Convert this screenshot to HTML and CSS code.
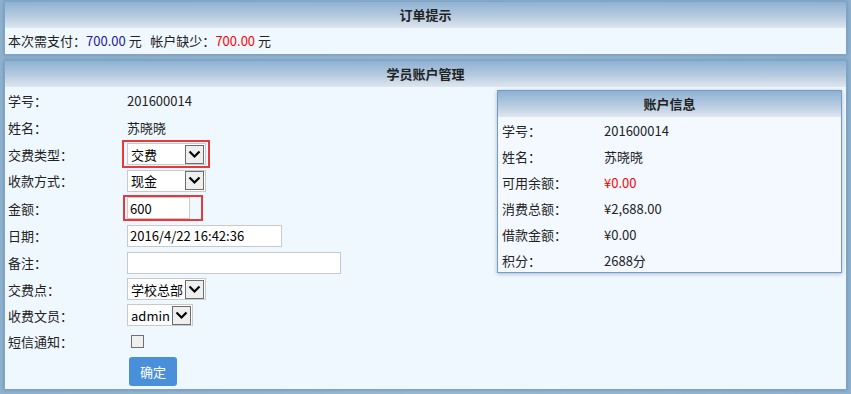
FILE: index.html
```html
<!DOCTYPE html>
<html lang="zh-CN">

<head>
  <meta charset="UTF-8">
  <title>学员账户管理</title>
  <link rel="stylesheet" href="styles.css">
</head>

<body>
  <div class="panel panel-order">
    <div class="panel-title">订单提示</div>
    <div class="order-line">
      本次需支付：<span class="pay">700.00</span> 元&nbsp;&nbsp;&nbsp;帐户缺少：<span class="lack">700.00</span> 元
    </div>
  </div>

  <div class="panel panel-main">
    <div class="panel-title">学员账户管理</div>
    <div class="main-body">
      <form class="form">
        <div class="row">
          <label>学号：</label>
          <span>201600014</span>
        </div>
        <div class="row">
          <label>姓名：</label>
          <span>苏晓晓</span>
        </div>
        <div class="row tight">
          <label>交费类型：</label>
          <span class="mark mark-type">
            <span class="select w78">
              <select>
                <option>交费</option>
                <option>退费</option>
              </select>
              <span class="arrow"><svg width="13" height="9" viewBox="0 0 13 9"><path d="M1.5 1.5 L6.5 6.5 L11.5 1.5" fill="none" stroke="#000" stroke-width="2.2"/></svg></span>
            </span>
          </span>
        </div>
        <div class="row">
          <label>收款方式：</label>
          <span class="select w78">
            <select>
              <option>现金</option>
              <option>刷卡</option>
            </select>
            <span class="arrow"><svg width="13" height="9" viewBox="0 0 13 9"><path d="M1.5 1.5 L6.5 6.5 L11.5 1.5" fill="none" stroke="#000" stroke-width="2.2"/></svg></span>
          </span>
        </div>
        <div class="row tall">
          <label>金额：</label>
          <span class="mark mark-amount">
            <input type="text" class="input w62" value="600">
          </span>
        </div>
        <div class="row">
          <label>日期：</label>
          <input type="text" class="input w154" value="2016/4/22 16:42:36">
        </div>
        <div class="row">
          <label>备注：</label>
          <input type="text" class="input w213" value="">
        </div>
        <div class="row tight">
          <label>交费点：</label>
          <span class="select w78">
            <select>
              <option>学校总部</option>
            </select>
            <span class="arrow"><svg width="13" height="9" viewBox="0 0 13 9"><path d="M1.5 1.5 L6.5 6.5 L11.5 1.5" fill="none" stroke="#000" stroke-width="2.2"/></svg></span>
          </span>
        </div>
        <div class="row tight">
          <label>收费文员：</label>
          <span class="select w65">
            <select>
              <option>admin</option>
            </select>
            <span class="arrow"><svg width="13" height="9" viewBox="0 0 13 9"><path d="M1.5 1.5 L6.5 6.5 L11.5 1.5" fill="none" stroke="#000" stroke-width="2.2"/></svg></span>
          </span>
        </div>
        <div class="row tight">
          <label>短信通知：</label>
          <span class="check"></span>
        </div>
        <div class="row-btn">
          <button type="button" class="btn">确定</button>
        </div>
      </form>

      <div class="info">
        <div class="info-title">账户信息</div>
        <div class="info-row"><span class="info-label">学号：</span><span>201600014</span></div>
        <div class="info-row"><span class="info-label">姓名：</span><span>苏晓晓</span></div>
        <div class="info-row"><span class="info-label">可用余额：</span><span class="lack">¥0.00</span></div>
        <div class="info-row"><span class="info-label">消费总额：</span><span>¥2,688.00</span></div>
        <div class="info-row"><span class="info-label">借款金额：</span><span>¥0.00</span></div>
        <div class="info-row"><span class="info-label">积分：</span><span>2688分</span></div>
      </div>
    </div>
  </div>
</body>

</html>
```

FILE: styles.css
```css
body {
  font-family: "Noto Sans CJK SC", "Noto Sans", sans-serif;
  font-size: 13px;
  color: #222;
  margin: 0;
  padding-top: 1px;
  background: linear-gradient(to right, #8fb1cf, #9ab8d3 50%, #8fb1cf);
  height: 394px;
  overflow: hidden;
}

.panel {
  margin: 0 4px;
  border: 1px solid #7ba6c9;
  background-color: #f0f8ff;
  box-shadow: 0 0 3px rgba(40, 70, 100, 0.35);
}

.panel-title {
  height: 26px;
  line-height: 26px;
  text-align: center;
  font-weight: bold;
  color: #222;
  background: linear-gradient(to bottom, #8fb1d3, #b6cbe0 55%, #dfe6ee);
}

.panel-order {
  height: 52px;
}

.order-line {
  height: 25px;
  line-height: 25px;
  padding-left: 3px;
}

.pay {
  color: #1a1a9a;
}

.lack {
  color: #f00;
}

.panel-main {
  margin-top: 5px;
}

.main-body {
  display: flex;
  padding-bottom: 3px;
}

.form {
  width: 490px;
  margin: 0;
}

.row {
  display: flex;
  align-items: center;
  height: 27px;
}

.row.tight {
  height: 26px;
}

.row.tall {
  height: 28px;
}

.row label {
  width: 119px;
  padding-left: 3px;
  flex-shrink: 0;
}

.select {
  display: inline-flex;
  align-items: center;
  height: 22px;
  box-sizing: border-box;
  border: 1px solid #c9c9c9;
  background: white;
  padding-right: 1px;
}

.select select {
  flex: 1;
  min-width: 0;
  border: none;
  background: transparent;
  appearance: none;
  -webkit-appearance: none;
  font: inherit;
  color: #000;
  padding: 0 0 0 3px;
  outline: none;
}

.arrow {
  display: flex;
  align-items: center;
  justify-content: center;
  width: 19px;
  height: 19px;
  box-sizing: border-box;
  border: 1px solid #6d6d6d;
  background: #efefef;
}

.w78 {
  width: 79px;
}

.w65 {
  width: 66px;
}

.input {
  height: 22px;
  box-sizing: border-box;
  border: 1px solid #c9c9c9;
  background: white;
  font: inherit;
  color: #000;
  padding: 0 0 0 2px;
  outline: none;
}

.w62 {
  width: 63px;
}

.w154 {
  width: 155px;
}

.w213 {
  width: 214px;
}

.mark {
  display: inline-flex;
  border: 2px solid #e8383a;
  margin-left: -5px;
}

.mark-type {
  padding: 1px 2px 1px 3px;
}

.mark-amount {
  padding: 0 11px 0 2px;
  margin-left: -4px;
}

.check {
  width: 13px;
  height: 13px;
  box-sizing: border-box;
  border: 1px solid #707070;
  background: #efefef;
  margin-left: 4px;
}

.row-btn {
  padding: 3px 0 0 124px;
}

.btn {
  width: 48px;
  height: 29px;
  border: none;
  border-radius: 3px;
  background-color: #4a8fd9;
  color: white;
  font: inherit;
  padding: 0;
}

.info {
  width: 345px;
  height: 183px;
  box-sizing: border-box;
  margin-top: 3px;
  margin-left: 2px;
  border: 1px solid #6f9dc7;
  background: #f3f9ff;
  box-shadow: 0 1px 4px rgba(40, 70, 100, 0.35);
}

.info-title {
  height: 26px;
  line-height: 26px;
  text-align: center;
  font-weight: bold;
  background: linear-gradient(to bottom, #8fb1d3, #b6cbe0 55%, #dfe6ee);
}

.info-row {
  display: flex;
  align-items: center;
  height: 26px;
  padding-left: 4px;
}

.info-label {
  width: 102px;
}
```
